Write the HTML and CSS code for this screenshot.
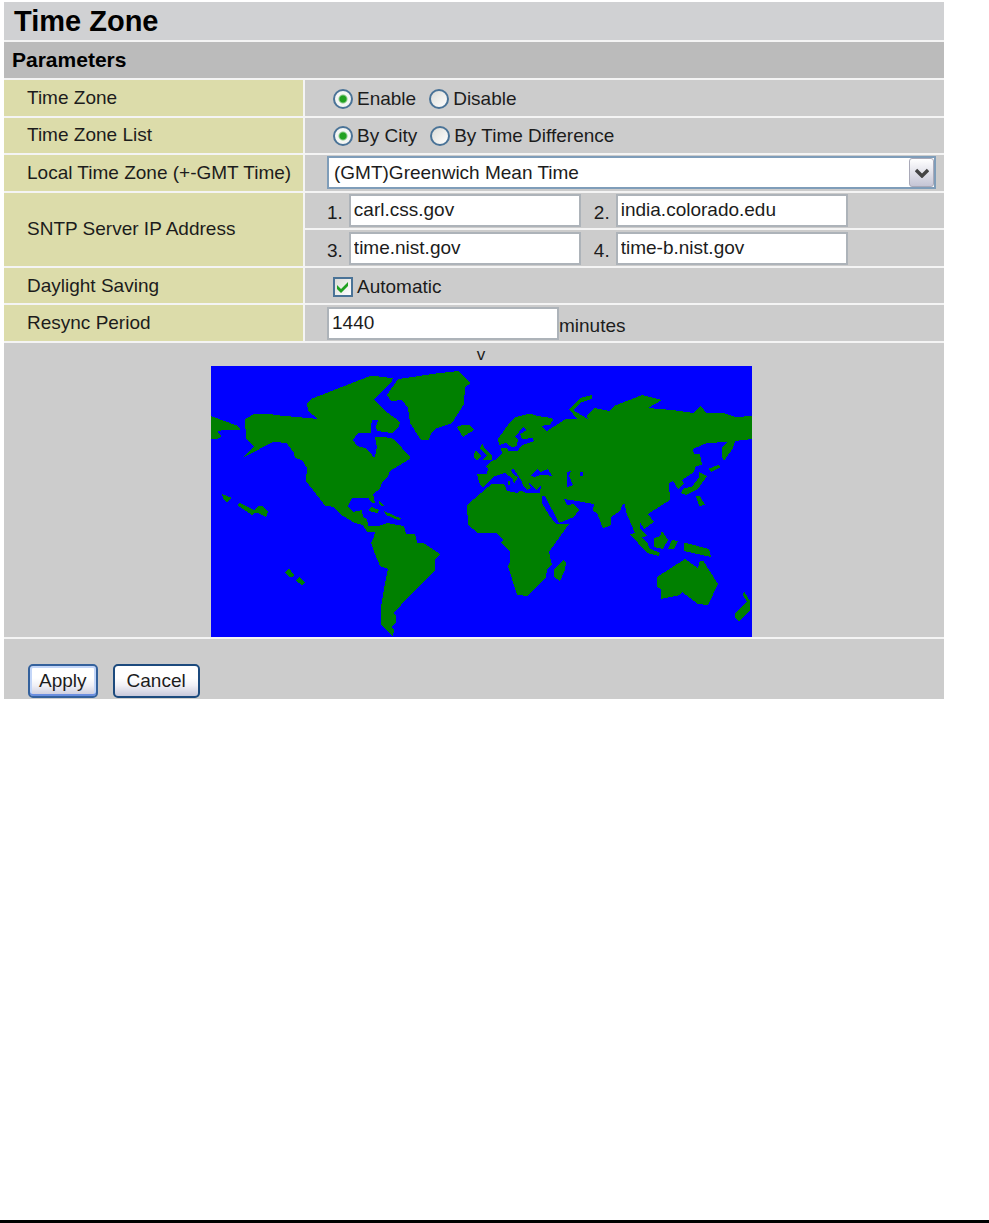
FILE: index.html
```html
<!DOCTYPE html>
<html lang="en">
<head>
<meta charset="utf-8">
<title>Time Zone</title>
<link rel="stylesheet" href="styles.css">
</head>
<body>
<main class="panel">
  <h1 class="title">Time Zone</h1>
  <h2 class="subtitle">Parameters</h2>
  <form class="form">
    <div class="fields">
      <div class="name">Time Zone</div>
      <div class="value choices" role="radiogroup" aria-label="Time Zone">
        <label class="choice"><input class="radio" type="radio" name="tz" checked>Enable</label>
        <label class="choice"><input class="radio" type="radio" name="tz">Disable</label>
      </div>

      <div class="name">Time Zone List</div>
      <div class="value choices" role="radiogroup" aria-label="Time Zone List">
        <label class="choice"><input class="radio" type="radio" name="list" checked>By City</label>
        <label class="choice"><input class="radio" type="radio" name="list">By Time Difference</label>
      </div>

      <label class="name" for="zone">Local Time Zone (+-GMT Time)</label>
      <div class="value">
        <div class="picker">
          <select class="select" id="zone"><option>(GMT)Greenwich Mean Time</option></select>
          <span class="arrow"><svg width="14" height="10" viewBox="0 0 14 10"><path d="M1 2l6 6 6-6" fill="none" stroke="#444" stroke-width="3.4"/></svg></span>
        </div>
      </div>

      <div class="name tall">SNTP Server IP Address</div>
      <div class="value servers">
        <label class="server"><span class="note">1.</span><input class="text" type="text" value="carl.css.gov"></label>
        <label class="server"><span class="note">2.</span><input class="text" type="text" value="india.colorado.edu"></label>
      </div>
      <div class="value servers">
        <label class="server"><span class="note">3.</span><input class="text" type="text" value="time.nist.gov"></label>
        <label class="server"><span class="note">4.</span><input class="text" type="text" value="time-b.nist.gov"></label>
      </div>

      <div class="name">Daylight Saving</div>
      <div class="value choices">
        <label class="choice"><span class="checkbox"><input class="box" type="checkbox" checked><svg class="tick" width="20" height="20" viewBox="0 0 20 20"><path d="M4 8l4 4 7-7v4l-7 7-4-4z" fill="#21a121"/></svg></span>Automatic</label>
      </div>

      <label class="name" for="resync">Resync Period</label>
      <div class="value"><input class="text" id="resync" type="text" value="1440"><span class="note">minutes</span></div>
    </div>

    <div class="mapcell">
      <div class="marker">v</div>
      <svg class="map" width="541" height="271" viewBox="211 366 541 271" role="img" aria-label="World map">
        <rect x="211" y="366" width="541" height="271" fill="#0000ff"/>
        <g fill="#008000">
          <path d="M245 419L255 413.500H270L275 415L318 419L308 411L307 403L311 399L370 376H378L380 377L393 378L392 381L374 400L385 411L395 418L400 423L399 426L392 433L377 431L376 427L378 420H372L371 427V433H358L353 440L357 446L365 448L372 454L373 457H375L377 447L375 437L387 437.500L394 439L410 457V459L390 471L388 477L382 482L380 489L373 494L375 503H372L368 497.500H352L348 506L353 512L362 510L363 517L367 519L368 525.500H380L387 523L404 526L406 533.500H415L417 542.500H423L440 554L435 560V570L408 597L394 613L396 616V622L392 627L394 630L393 637L381 624V607L385 583L388 569L380 566L375 554L371 543L374 537L375 532H367L363 525L355 523L340 514L334 507L325 505.500L306 481L307 468L302 460L295 458L294 453L287 443.500L274 441.500L244 457L254 446L246 439Z"/>
          <path d="M211 416L238 426L241 430.500L222 430L217 432L222 436L218 438.500H211Z"/>
          <path d="M222 494L232 498L227 502L224 500ZM237 505L240 503L254 510L258 506H262L268 512L266 517L258 513H255L252 515ZM289 568L294 575L293 577H289L285 573ZM296 581L299 577L305 582L302 585Z"/>
          <path d="M368 510L372 507L379 510L378 513L372 512ZM379 501L384 505.500L382 506L379 504ZM384 511L402 519L398 520L386 515Z"/>
          <path d="M387 395L398 379L413 377L432 374L458 371L471 383L465 387L464 404L452 423L435 429L431 433L429 440H421L410 423L408 408L402 400L391 401Z"/>
          <path d="M457 427L462 425H470L474 430L463 437ZM483 443L484 448L492 455V459.500H483L487 456L480 448ZM476 450L481 456L477 460L474 458V454Z"/>
          <path d="M477 474H487L488 469L486 466L491 461L497 459L502 453L501 448H507L508 450.500H518L522 445L534 441L533 438L522 439L520 434L527 430L523 427L515 437L518 439L517 446L512 447.500L506 443L499 445L498 439L510 422L516 417L530 413.500L538 416L551 418L553 420L550 424.500L541 426L547 431L565 419.500L577 419L569 409L580 398L592 395V399L582 402L573 410L588 419L587 416L594 408L610 411L614 406L642 395L662 400L648 408L672 410L693 413L701 406L706 412.500L725 413.500L735 417L752 416V439L735 441L733 448L724 461L722 457V447L727 442L707 443L693 449L694 454H700L702 465L696 466L694 472L682 480L684 484L678 489L673 481L669 483L670 500L648 514L654 522L644 529L640 522V529L648 536L641 537L648 543L649 548L660 553L659 556L647 553L630 534L635 533L626 512L625 503.500H623L620 511L611 517V525L603 528.500L597 513L593 511L594 504L577 501L564 499L567 505L574 504L579 510L574 517L559 523L545 496H542V503L549 515L556 524H569L549 552L552 565L547 569L546 577L528 596L517 595L508 566L510 562V552L501 543L503 540L496 533H478L468 525L467 505L492 483.500H504L507 491L517 493L520 490.500L525 492.500H540L541 485L536 490L528 481L531 488L527 490L523 485L521 480L513 468L511 470L514 475L518 477L514 484L513 479L505 473L495 476L483 487L480 485Z"/>
          <path d="M508 481H510V485H508ZM563 560L566 562L565 570L560 581L554 577V569Z"/>
          <path d="M662 531L668 540L663 549L654 547V538L660 536ZM672 540L678 541L674 549H668ZM684 542.500L709 549L711 557L684 551Z"/>
          <path d="M685 559L698 568L700 560.500H703L718 584L708 605L698 604L682 592L680 595L661 599V589L657 587V577Z"/>
          <path d="M744 591L750 601V610L739 622L735 618V613L747 602L743 595Z"/>
          <path d="M699 472L707 476L698 489L686 495L681 493L684 488L692 487L699 477ZM708 469L719 464.500L720 467.500L711 472ZM696 496H700L705 505L699 506Z"/>
        </g>
        <path fill="#0000ff" d="M531 476L537 469L541 472L548 469L552 476L542 474.500L535 477ZM567 472L571 471L569 476L573 485L567 487ZM580 472H583V476H580Z"/>
      </svg>
    </div>

    <div class="actions">
      <button class="button primary" type="submit">Apply</button>
      <button class="button" type="button">Cancel</button>
    </div>
  </form>
</main>
<footer class="rule"></footer>
</body>
</html>
```
FILE: styles.css
```css
* { box-sizing: border-box; }

body {
  margin: 0;
  min-height: 100vh;
  display: flex;
  flex-direction: column;
  justify-content: space-between;
  background: #fff;
  color: #1c1c1c;
  font: 19px/22px "Liberation Sans", Arial, sans-serif;
}

.panel {
  margin: 2px 45px 0 4px;
  display: flex;
  flex-direction: column;
  gap: 2px;
  background: #f4f4f4;
}

.title,
.subtitle {
  margin: 0;
  color: #000;
  font-weight: bold;
}

.title {
  padding: 0 10px;
  background: #d0d1d3;
  font-size: 29px;
  line-height: 38px;
}

.subtitle {
  padding: 0 8px;
  background: #bbb;
  font-size: 21px;
  line-height: 36px;
}

.form {
  display: flex;
  flex-direction: column;
  gap: 2px;
}

.fields {
  min-height: 261px;
  display: grid;
  grid-template-columns: 299px 1fr;
  grid-auto-rows: 1fr;
  gap: 2px;
}

.name,
.value {
  display: flex;
  align-items: center;
}

.name {
  padding-left: 23px;
  background: #dcdcaa;
  white-space: nowrap;
}

.tall { grid-row: span 2; }

.value {
  padding: 0 8px 0 22px;
  background: #ccc;
}

.choices {
  gap: 13px;
  padding-left: 28px;
}

.choice {
  display: flex;
  align-items: center;
  gap: 4px;
  padding-top: 2px;
}

.radio,
.box {
  appearance: none;
  width: 20px;
  height: 20px;
  margin: 0;
  border: 2px solid #4a7397;
  background: linear-gradient(135deg, #dcdcd7, #fff);
}

.radio { border-radius: 50%; }

.radio:checked {
  background: radial-gradient(circle, #21a121 0 3px, #f4f6f4 5px);
}

.checkbox {
  position: relative;
  display: flex;
}

.tick {
  position: absolute;
  inset: 0;
  pointer-events: none;
}

.box:not(:checked) + .tick { display: none; }

.picker {
  position: relative;
  flex: 1;
  display: flex;
}

.select,
.text {
  height: 33px;
  border: 2px solid #adb3b9;
  border-radius: 0;
  background: #fff;
  color: #1c1c1c;
  font: inherit;
}

.select {
  appearance: none;
  width: 100%;
  padding: 0 30px 0 5px;
  border-color: #7f9db9;
}

.arrow {
  position: absolute;
  top: 2px;
  right: 2px;
  bottom: 2px;
  width: 25px;
  display: flex;
  align-items: center;
  justify-content: center;
  border: 1px solid #a9a9b8;
  border-radius: 3px;
  background: linear-gradient(#fff, #c5c5d5);
  pointer-events: none;
}

.servers { gap: 13px; }

.server {
  display: flex;
  align-items: center;
  gap: 6px;
}

.text {
  width: 232px;
  padding: 0 3px;
}

.note { padding-top: 6px; }

.mapcell {
  display: flex;
  flex-direction: column;
  align-items: center;
  padding-left: 14px;
  background: #ccc;
}

.marker {
  font-size: 17px;
  line-height: 23px;
}

.map {
  display: block;
  shape-rendering: crispEdges;
}

.actions {
  display: flex;
  gap: 15px;
  padding: 25px 24px 1px;
  background: #ccc;
}

.button {
  height: 34px;
  padding: 0 12px;
  border: 2px solid #1c4a7d;
  border-radius: 5px;
  background: linear-gradient(#fff 40%, #f0f0f6 65%, #c8c8da);
  color: #1c1c1c;
  font: inherit;
}

.primary {
  padding: 0 9px;
  border-color: #34619c;
  box-shadow: inset 0 -2px #6b8fe0, inset 0 0 0 2px #c3d6f8;
}

.rule {
  border-top: 3px solid #000;
}
```
